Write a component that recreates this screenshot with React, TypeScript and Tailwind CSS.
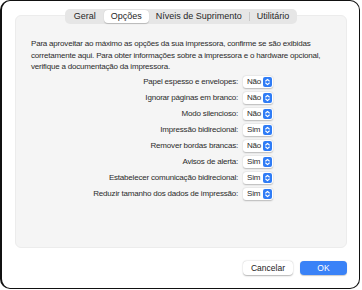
const rows: [string, string][] = [
  ["Papel espesso e envelopes:", "Não"],
  ["Ignorar páginas em branco:", "Não"],
  ["Modo silencioso:", "Não"],
  ["Impressão bidirecional:", "Sim"],
  ["Remover bordas brancas:", "Não"],
  ["Avisos de alerta:", "Sim"],
  ["Estabelecer comunicação bidirecional:", "Sim"],
  ["Reduzir tamanho dos dados de impressão:", "Sim"],
];

function Stepper() {
  return (
    <svg width="9" height="10" viewBox="0 0 9 10">
      <rect x="0" y="0" width="9" height="10" rx="2" fill="#2f7cf6" />
      <path d="M2.7 4 L4.5 2.3 L6.3 4" stroke="white" strokeWidth="1.1" fill="none" strokeLinecap="round" strokeLinejoin="round" />
      <path d="M2.7 6 L4.5 7.7 L6.3 6" stroke="white" strokeWidth="1.1" fill="none" strokeLinecap="round" strokeLinejoin="round" />
    </svg>
  );
}

export default function App() {
  return (
    <div
      className="w-[362px] h-[290px] bg-white"
      style={{ fontFamily: "'Liberation Sans', Arial, sans-serif" }}
    >
      <div className="w-[360px] h-[289px] flex flex-col border border-l-2 border-[#111] rounded-[10px] bg-white">
        {/* panel */}
        <div className="mt-[14px] ml-[13px] w-[332px] h-[233px] bg-[#f5f5f5] rounded-[6px] border border-[#ececec] flex flex-col">
          <div className="-mt-[7px] self-center flex items-center h-[15px] bg-[#e6e6e6] rounded-[5px] px-[1px] text-[9px] text-[#262626]">
            <div className="px-[8px] leading-[13px]">Geral</div>
            <div className="px-[7px] leading-[13px] bg-white rounded-[4px] shadow-[0_0.5px_1px_rgba(0,0,0,0.2)]">Opções</div>
            <div className="px-[7px] leading-[13px]">Níveis de Suprimento</div>
            <div className="w-px h-[9px] bg-[#c8c8c8]"></div>
            <div className="px-[7px] leading-[13px]">Utilitário</div>
          </div>
          <p className="mt-[14px] ml-[15px] w-[296px] text-[8px] tracking-[-0.2px] leading-[11.5px] text-[#2b2b2b]">
            Para aproveitar ao máximo as opções da sua impressora, confirme se são exibidas corretamente aqui. Para obter informações sobre a impressora e o hardware opcional, verifique a documentação da impressora.
          </p>
          <div className="mt-[1px] flex flex-col pl-[15px]">
            {rows.map(([label, value]) => (
              <div key={label} className="h-[16px] flex items-center text-[8px] tracking-[-0.2px] text-[#2b2b2b]">
                <div className="w-[207px] text-right">{label}</div>
                <div className="ml-[5px] w-[30px] h-[12px] bg-white rounded-[3px] shadow-[0_0.5px_1.5px_rgba(0,0,0,0.25)] flex items-center justify-between pl-[4px] pr-[1.5px]">
                  <span className="leading-none">{value}</span>
                  <Stepper />
                </div>
              </div>
            ))}
          </div>
        </div>
        {/* buttons */}
        <div className="mt-[13px] flex justify-end gap-[7px] pr-[12px]">
          <button className="w-[50px] h-[14px] bg-white rounded-[4px] shadow-[0_0.5px_1.5px_rgba(0,0,0,0.3)] text-[8.5px] leading-none text-[#222]">
            Cancelar
          </button>
          <button className="w-[47px] h-[14px] bg-[#3a82f7] rounded-[4px] shadow-[0_0.5px_1px_rgba(0,0,0,0.2)] text-[8.5px] leading-none text-white">
            OK
          </button>
        </div>
      </div>
    </div>
  );
}
